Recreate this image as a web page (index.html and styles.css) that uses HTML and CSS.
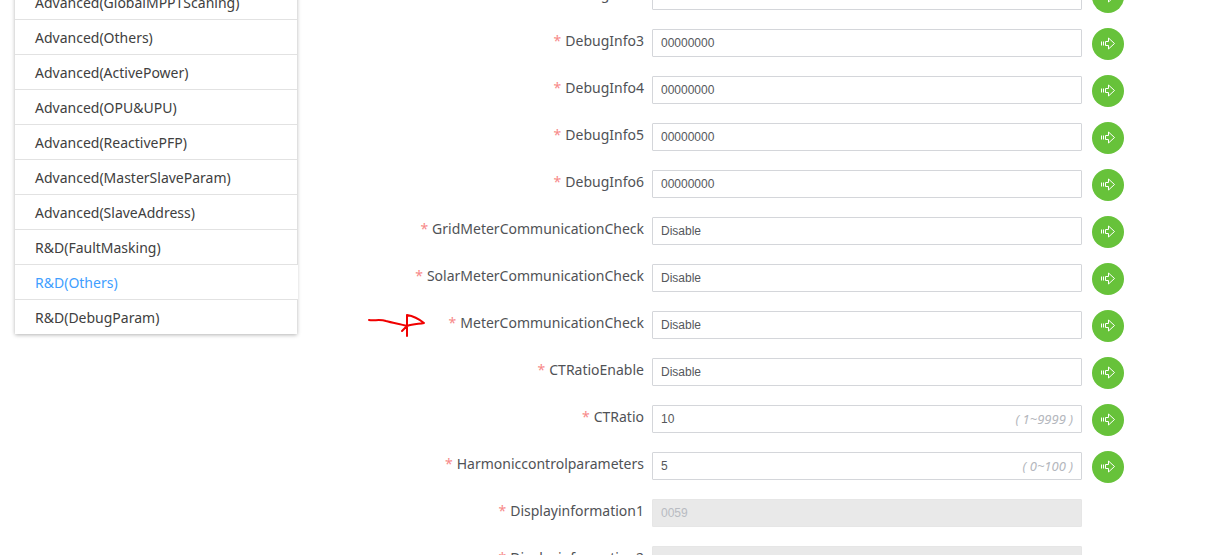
FILE: index.html
```html
<!DOCTYPE html>
<html lang="en">
<head>
    <meta charset="UTF-8">
    <meta name="viewport" content="width=device-width, initial-scale=1.0">
    <title>R&amp;D(Others)</title>
    <link rel="stylesheet" href="styles.css">
</head>
<body>

    <!-- Arrow icon used by every send button -->
    <svg class="sprite" aria-hidden="true">
        <symbol id="icon-send" viewBox="0 0 16 16">
            <path d="M1.500 5.500v4M3.500 5.500v4M8.500 5.500h-3v4h3V13L14.500 7.500 8.500 2z" fill="none" stroke="currentColor" stroke-width="1"/>
        </symbol>
    </svg>

    <div class="page">
        <nav class="menu">
            <a href="#" class="menu-item">Advanced(GlobalMPPTScaning)</a>
            <a href="#" class="menu-item">Advanced(Others)</a>
            <a href="#" class="menu-item">Advanced(ActivePower)</a>
            <a href="#" class="menu-item">Advanced(OPU&amp;UPU)</a>
            <a href="#" class="menu-item">Advanced(ReactivePFP)</a>
            <a href="#" class="menu-item">Advanced(MasterSlaveParam)</a>
            <a href="#" class="menu-item">Advanced(SlaveAddress)</a>
            <a href="#" class="menu-item">R&amp;D(FaultMasking)</a>
            <a href="#" class="menu-item active">R&amp;D(Others)</a>
            <a href="#" class="menu-item">R&amp;D(DebugParam)</a>
        </nav>

        <form class="params">
            <div class="row">
                <label for="debug2">DebugInfo2</label>
                <div class="field"><input type="text" id="debug2" value="00000000"></div>
                <button type="button" class="send" aria-label="Send"><svg><use href="#icon-send"/></svg></button>
            </div>
            <div class="row">
                <label for="debug3">DebugInfo3</label>
                <div class="field"><input type="text" id="debug3" value="00000000"></div>
                <button type="button" class="send" aria-label="Send"><svg><use href="#icon-send"/></svg></button>
            </div>
            <div class="row">
                <label for="debug4">DebugInfo4</label>
                <div class="field"><input type="text" id="debug4" value="00000000"></div>
                <button type="button" class="send" aria-label="Send"><svg><use href="#icon-send"/></svg></button>
            </div>
            <div class="row">
                <label for="debug5">DebugInfo5</label>
                <div class="field"><input type="text" id="debug5" value="00000000"></div>
                <button type="button" class="send" aria-label="Send"><svg><use href="#icon-send"/></svg></button>
            </div>
            <div class="row">
                <label for="debug6">DebugInfo6</label>
                <div class="field"><input type="text" id="debug6" value="00000000"></div>
                <button type="button" class="send" aria-label="Send"><svg><use href="#icon-send"/></svg></button>
            </div>
            <div class="row">
                <label for="grid-meter">GridMeterCommunicationCheck</label>
                <div class="field"><select id="grid-meter"><option>Disable</option><option>Enable</option></select></div>
                <button type="button" class="send" aria-label="Send"><svg><use href="#icon-send"/></svg></button>
            </div>
            <div class="row">
                <label for="solar-meter">SolarMeterCommunicationCheck</label>
                <div class="field"><select id="solar-meter"><option>Disable</option><option>Enable</option></select></div>
                <button type="button" class="send" aria-label="Send"><svg><use href="#icon-send"/></svg></button>
            </div>
            <div class="row">
                <label for="meter">MeterCommunicationCheck</label>
                <div class="field"><select id="meter"><option>Disable</option><option>Enable</option></select></div>
                <button type="button" class="send" aria-label="Send"><svg><use href="#icon-send"/></svg></button>
                <!-- Hand-drawn mark pointing at this row -->
                <svg class="mark" viewBox="0 0 60 30" aria-hidden="true">
                    <path d="M2 10C7 11 13 9 19 11C26 13 33 14 40 16C46 14 52 14 57 13C52 9 46 6 40 5V26M40 16L35 21"/>
                </svg>
            </div>
            <div class="row">
                <label for="ct-enable">CTRatioEnable</label>
                <div class="field"><select id="ct-enable"><option>Disable</option><option>Enable</option></select></div>
                <button type="button" class="send" aria-label="Send"><svg><use href="#icon-send"/></svg></button>
            </div>
            <div class="row">
                <label for="ct-ratio">CTRatio</label>
                <div class="field"><input type="text" id="ct-ratio" value="10"><span class="range">( 1~9999 )</span></div>
                <button type="button" class="send" aria-label="Send"><svg><use href="#icon-send"/></svg></button>
            </div>
            <div class="row">
                <label for="harmonic">Harmoniccontrolparameters</label>
                <div class="field"><input type="text" id="harmonic" value="5"><span class="range">( 0~100 )</span></div>
                <button type="button" class="send" aria-label="Send"><svg><use href="#icon-send"/></svg></button>
            </div>
            <div class="row">
                <label for="display1">Displayinformation1</label>
                <div class="field"><input type="text" id="display1" value="0059" disabled></div>
            </div>
            <div class="row">
                <label for="display2">Displayinformation2</label>
                <div class="field"><input type="text" id="display2" disabled></div>
            </div>
        </form>
    </div>

</body>
</html>
```
FILE: styles.css
```css
* {
    box-sizing: border-box;
}

body {
    margin: 0;
    height: 100vh;
    overflow: hidden;
    background-color: #fff;
    color: #505256;
    font-family: "Segoe UI", "Noto Sans", sans-serif;
    font-size: 14px;
}

.sprite {
    display: none;
}

.page {
    display: flex;
    align-items: flex-start;
    margin-top: -19px;
    padding: 0 86px 0 15px;
}

/* Left menu */
.menu {
    flex: 0 0 282px;
    margin-top: 4px;
    box-shadow: 0 1px 4px rgba(0, 0, 0, 0.3);
}

.menu-item {
    display: block;
    height: 35px;
    padding-left: 20px;
    border-bottom: 1px solid #e2e2e2;
    background-color: #fff;
    color: #404040;
    line-height: 36px;
    text-decoration: none;
}

.menu-item:last-child {
    height: 34px;
    border-bottom: none;
}

.menu-item.active {
    margin-right: -1px;
    color: #409eff;
}

/* Parameter form */
.params {
    flex: 1;
}

.row {
    position: relative;
    display: flex;
    align-items: center;
    height: 32px;
    margin-bottom: 15px;
}

.row label {
    flex: 0 0 355px;
    padding-right: 8px;
    padding-bottom: 6px;
    line-height: 20px;
    text-align: right;
}

.row label::before {
    content: "*";
    margin-right: 4px;
    color: #f78989;
}

.field {
    position: relative;
    flex: 1;
    margin-right: 42px;
    margin-bottom: 2px;
}

.field input,
.field select {
    display: block;
    width: 100%;
    height: 28px;
    margin: 0;
    padding: 0 8px;
    border: 1px solid #d4d6da;
    border-radius: 1px;
    background-color: #fff;
    color: #55575b;
    font-family: Arial, "Liberation Sans", sans-serif;
    font-size: 12px;
    appearance: none;
}

.field input:disabled {
    border-color: #e6e6e6;
    background-color: #e9e9e9;
    color: #b8bbc2;
}

.range {
    position: absolute;
    top: 0;
    right: 9px;
    color: #b4b7bd;
    font-size: 13px;
    font-style: italic;
    line-height: 28px;
}

.send {
    display: flex;
    align-items: center;
    justify-content: center;
    width: 32px;
    height: 32px;
    margin-left: -32px;
    padding: 0;
    border: none;
    border-radius: 50%;
    background-color: #67c23a;
    color: #fff;
    cursor: pointer;
}

.send svg {
    width: 16px;
    height: 16px;
}

.mark {
    position: absolute;
    top: 0;
    left: 70px;
    width: 60px;
    height: 30px;
    fill: none;
    stroke: #f00000;
    stroke-width: 2;
    stroke-linecap: round;
    stroke-linejoin: round;
}
```
